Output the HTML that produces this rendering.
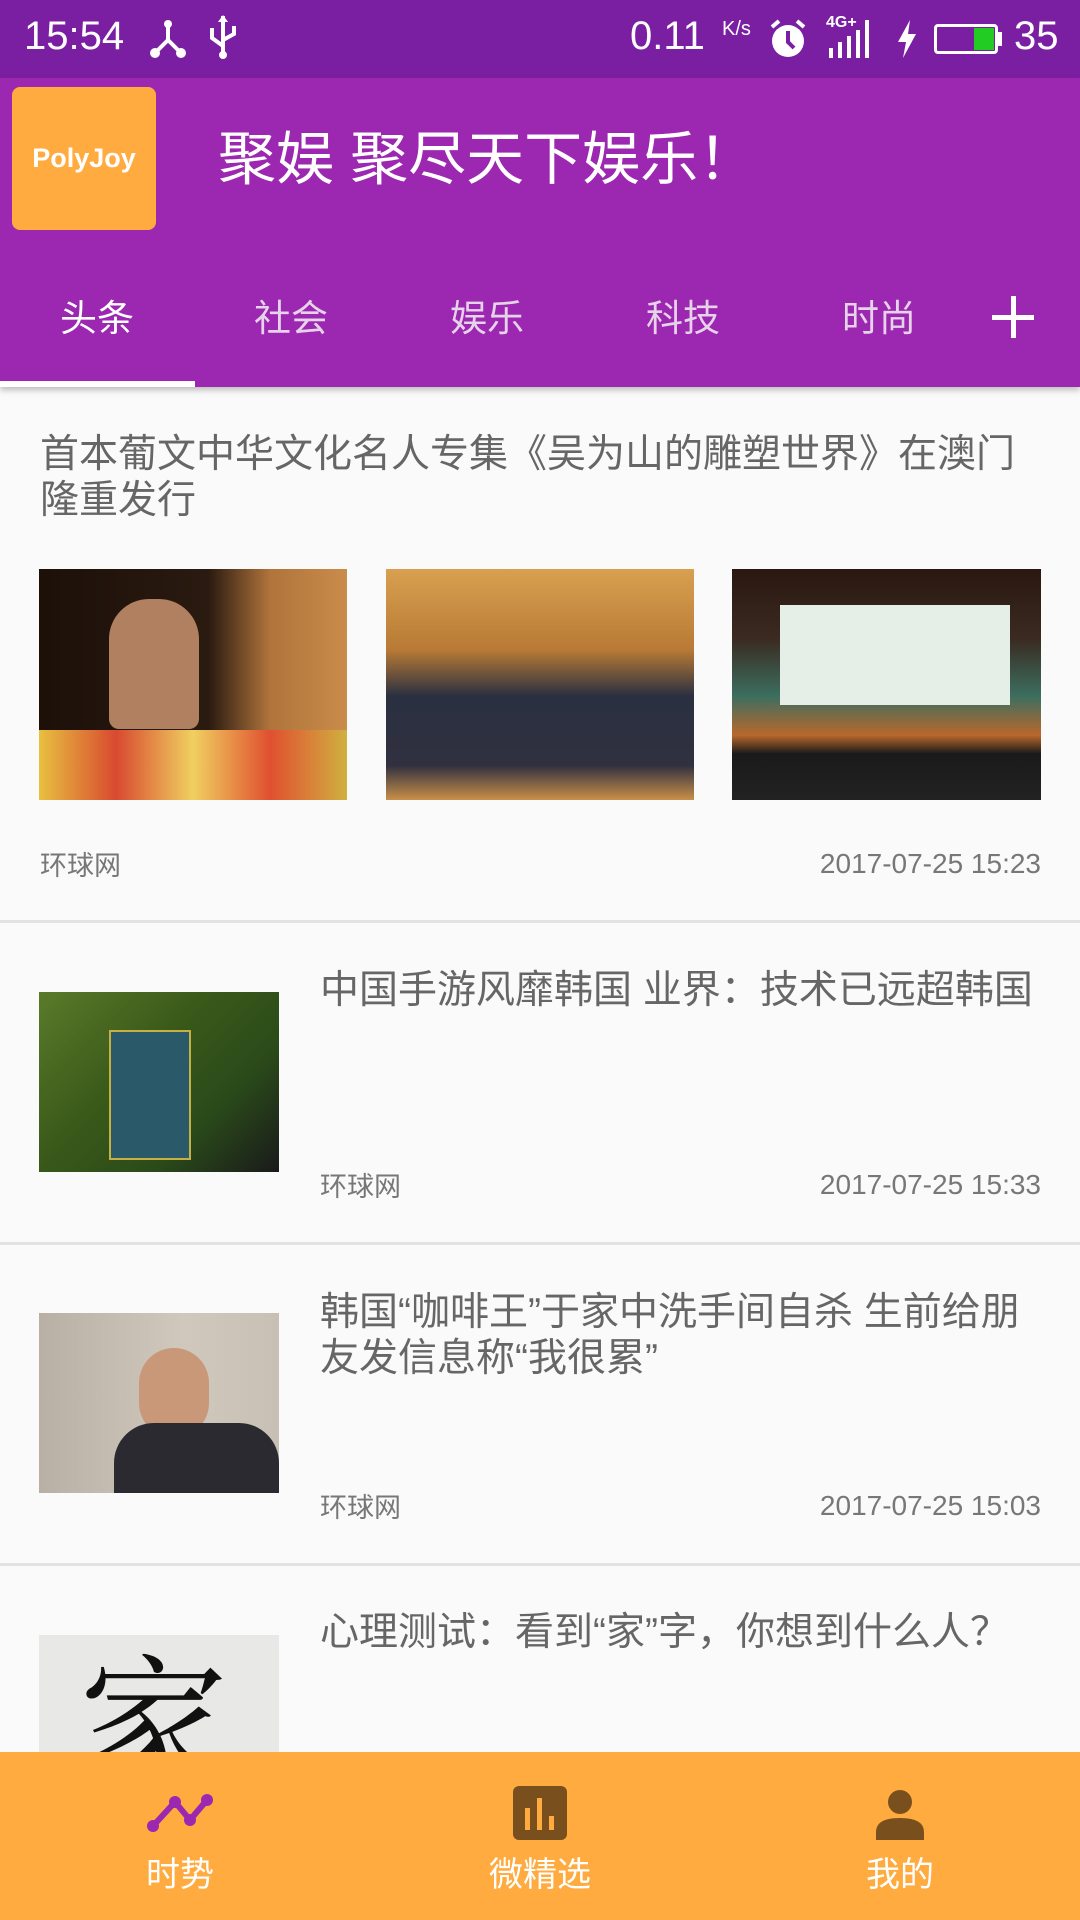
<!DOCTYPE html>
<html><head><meta charset="utf-8"><style>
*{margin:0;padding:0;box-sizing:border-box}
body{width:1080px;height:1920px;overflow:hidden;background:#fafafa;font-family:"Liberation Sans","Noto Sans CJK SC",sans-serif;position:relative}
.abs{position:absolute}
.sb{left:0;top:0;width:1080px;height:78px;background:#7b1fa2;color:#fff}
.hd{left:0;top:78px;width:1080px;height:309px;background:#9c27b0;box-shadow:0 3px 6px rgba(0,0,0,.25)}
.t{color:#666;font-size:39px;line-height:46px}
.s{color:#777;font-size:27px;line-height:30px}
.d{color:#777;font-size:28px;line-height:30px}
.dv{left:0;width:1080px;height:3px;background:#e2e2e2}
.tab{top:294px;width:140px;text-align:center;font-size:37px;color:#e6d3ea;line-height:50px}
.nav{left:0;top:1752px;width:1080px;height:168px;background:#ffab40}
.nl{top:1852px;width:200px;text-align:center;color:#fff;font-size:34px;line-height:46px}
</style></head><body>
<div class="abs sb">
 <div class="abs" style="left:24px;top:14px;font-size:40px;">15:54</div>
 <svg class="abs" style="left:148px;top:18px" width="40" height="42" viewBox="0 0 40 42"><path d="M20 6 V22 L8 34 M20 22 L32 34" stroke="#fff" stroke-width="4" fill="none"/><circle cx="20" cy="6" r="4" fill="#fff"/><circle cx="7" cy="35" r="5" fill="#fff"/><circle cx="33" cy="35" r="5" fill="#fff"/></svg>
 <svg class="abs" style="left:206px;top:14px" width="34" height="46" viewBox="0 0 34 46"><path d="M17 2 V42 M6 14 V24 L17 32 M28 12 V20 L17 26" stroke="#fff" stroke-width="4" fill="none"/><path d="M12 8 L17 1 L22 8Z" fill="#fff"/><circle cx="17" cy="41" r="4" fill="#fff"/></svg>
 <div class="abs" style="left:630px;top:14px;font-size:40px;">0.11</div>
 <div class="abs" style="left:722px;top:18px;font-size:20px;">K/s</div>
 <svg class="abs" style="left:768px;top:18px" width="40" height="42" viewBox="0 0 40 42"><circle cx="20" cy="23" r="16" fill="#fff"/><path d="M20 13 V24 L26 30" stroke="#7b1fa2" stroke-width="4" fill="none"/><path d="M4 9 L11 3 M36 9 L29 3" stroke="#fff" stroke-width="4"/></svg>
 <div class="abs" style="left:826px;top:14px;font-size:16px;font-weight:bold">4G+</div>
 <svg class="abs" style="left:826px;top:20px" width="54" height="38" viewBox="0 0 54 38"><rect x="3" y="28" width="4" height="10" fill="#fff"/><rect x="12" y="22" width="4" height="16" fill="#fff"/><rect x="21" y="16" width="4" height="22" fill="#fff"/><rect x="30" y="10" width="4" height="28" fill="#fff"/><rect x="39" y="0" width="4" height="38" fill="#fff"/></svg>
 <svg class="abs" style="left:896px;top:20px" width="22" height="38" viewBox="0 0 22 38"><path d="M14 0 L2 22 H10 L7 38 L20 14 H12Z" fill="#fff"/></svg>
 <div class="abs" style="left:934px;top:24px;width:64px;height:30px;border:3px solid #fff;border-radius:4px"></div>
 <div class="abs" style="left:998px;top:32px;width:4px;height:14px;background:#fff"></div>
 <div class="abs" style="left:974px;top:28px;width:20px;height:22px;background:#22cc22"></div>
 <div class="abs" style="left:1014px;top:14px;font-size:40px;">35</div>
</div>
<div class="abs hd">
 <div class="abs" style="left:12px;top:9px;width:144px;height:143px;background:#ffab40;border-radius:8px;color:#fff;font-size:27px;font-weight:bold;text-align:center;line-height:143px">PolyJoy</div>
 <div class="abs" style="left:218px;top:50px;font-size:58px;color:#fff;line-height:64px">聚娱 聚尽天下娱乐！</div>
</div>
<div class="abs tab" style="left:27px;color:#fff">头条</div>
<div class="abs tab" style="left:221px">社会</div>
<div class="abs tab" style="left:417px">娱乐</div>
<div class="abs tab" style="left:613px">科技</div>
<div class="abs tab" style="left:809px">时尚</div>
<div class="abs" style="left:992px;top:315px;width:42px;height:5px;background:#fff"></div>
<div class="abs" style="left:1011px;top:296px;width:5px;height:42px;background:#fff"></div>
<div class="abs" style="left:0;top:381px;width:195px;height:6px;background:#fff"></div>

<div class="abs t" style="left:40px;top:432px;width:1020px">首本葡文中华文化名人专集《吴为山的雕塑世界》在澳门<br>隆重发行</div>
<div class="abs" style="left:39px;top:569px;width:308px;height:231px;background:linear-gradient(90deg,#1c1009 0%,#2a1a10 55%,#b0743c 75%,#c98c4a 100%)"><div class="abs" style="left:0;bottom:0;width:308px;height:70px;background:linear-gradient(90deg,#e8c040,#d84a30,#f0d060,#e05030,#d0b040)"></div><div class="abs" style="left:70px;top:30px;width:90px;height:130px;background:#b08060;border-radius:40px 40px 10px 10px"></div></div>
<div class="abs" style="left:386px;top:569px;width:308px;height:231px;background:linear-gradient(180deg,#d8a050 0%,#b87a35 35%,#2a3040 55%,#303040 85%,#c89048 100%)"></div>
<div class="abs" style="left:732px;top:569px;width:309px;height:231px;background:linear-gradient(180deg,#2a1810 0%,#3a2a20 30%,#3c6e60 55%,#b8682c 72%,#1a1a1a 80%,#222 100%)"><div class="abs" style="left:48px;top:36px;width:230px;height:100px;background:#e6eee8"></div></div>
<div class="abs s" style="left:40px;top:851px">环球网</div>
<div class="abs d" style="right:39px;top:849px">2017-07-25 15:23</div>
<div class="abs dv" style="top:920px"></div>

<div class="abs" style="left:39px;top:992px;width:240px;height:180px;background:linear-gradient(135deg,#5a7a2a,#3a5a1a 40%,#2a4a1a 70%,#1a1a1a)"><div class="abs" style="left:70px;top:38px;width:82px;height:130px;background:#2a5a6a;border:2px solid #c8b040"></div></div>
<div class="abs t" style="left:320px;top:968px">中国手游风靡韩国 业界：技术已远超韩国</div>
<div class="abs s" style="left:320px;top:1172px">环球网</div>
<div class="abs d" style="right:39px;top:1170px">2017-07-25 15:33</div>
<div class="abs dv" style="top:1242px"></div>

<div class="abs" style="left:39px;top:1313px;width:240px;height:180px;background:linear-gradient(90deg,#b8b0a4,#d0c8bc 60%,#c8c0b4)"><div class="abs" style="left:100px;top:35px;width:70px;height:90px;background:#c89878;border-radius:35px"></div><div class="abs" style="left:75px;top:110px;width:165px;height:70px;background:#2a2a30;border-radius:40px 40px 0 0"></div></div>
<div class="abs t" style="left:320px;top:1290px">韩国“咖啡王”于家中洗手间自杀 生前给朋<br>友发信息称“我很累”</div>
<div class="abs s" style="left:320px;top:1493px">环球网</div>
<div class="abs d" style="right:39px;top:1491px">2017-07-25 15:03</div>
<div class="abs dv" style="top:1563px"></div>

<div class="abs" style="left:39px;top:1635px;width:240px;height:120px;background:#e8e8e6;overflow:hidden"><div class="abs" style="left:40px;top:5px;font-size:150px;line-height:150px;color:#111;font-family:'Noto Serif CJK SC',serif">家</div></div>
<div class="abs t" style="left:320px;top:1610px">心理测试：看到“家”字，你想到什么人？</div>

<div class="abs nav">
 <svg class="abs" style="left:145px;top:40px" width="70" height="42" viewBox="0 0 70 42"><path d="M8 34 L30 10 L45 28 L62 8" stroke="#9c27b0" stroke-width="6" fill="none" stroke-linecap="round"/><circle cx="8" cy="34" r="6" fill="#9c27b0"/><circle cx="30" cy="10" r="6" fill="#9c27b0"/><circle cx="45" cy="28" r="6" fill="#9c27b0"/><circle cx="62" cy="8" r="6" fill="#9c27b0"/></svg>
 <svg class="abs" style="left:513px;top:34px" width="54" height="54" viewBox="0 0 54 54"><rect x="0" y="0" width="54" height="54" rx="6" fill="#7a4f1e"/><rect x="12" y="22" width="5" height="22" fill="#ffab40"/><rect x="24" y="12" width="5" height="32" fill="#ffab40"/><rect x="36" y="30" width="5" height="14" fill="#ffab40"/></svg>
 <svg class="abs" style="left:874px;top:36px" width="52" height="56" viewBox="0 0 52 56"><ellipse cx="26" cy="14" rx="12" ry="12" fill="#7a4f1e"/><path d="M2 52 V44 Q2 30 26 30 Q50 30 50 44 V52Z" fill="#7a4f1e"/></svg>
</div>
<div class="abs nl" style="left:80px">时势</div>
<div class="abs nl" style="left:440px">微精选</div>
<div class="abs nl" style="left:800px">我的</div>
</body></html>
